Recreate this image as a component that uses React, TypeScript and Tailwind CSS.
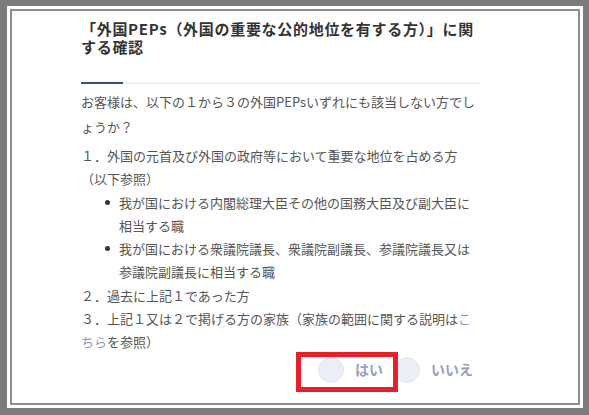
import React from 'react';

const jp = { fontFamily: '"Noto Sans CJK JP", "Noto Sans", sans-serif' };

const Bullet = ({ lines }: { lines: string[] }) => (
  <li className="flex">
    <span className="w-[38px] shrink-0 flex justify-end pr-[9px] pt-[9px]">
      <span className="block w-[5px] h-[5px] rounded-full bg-[#333]" />
    </span>
    <span>
      {lines.map((l, i) => (
        <span key={i} className="block whitespace-nowrap">{l}</span>
      ))}
    </span>
  </li>
);

const Radio = ({ label }: { label: string }) => (
  <label className="flex items-center gap-[11px]">
    <span className="block w-[26px] h-[26px] rounded-full bg-[#eceef6] border border-[#e4e6ef]" />
    <span className="text-[14px] font-bold text-[#9a9ec0]">{label}</span>
  </label>
);

export default function App() {
  return (
    <div style={jp} className="h-[415px] w-full bg-white border-t-[6px] border-r-[6px] border-l-[7px] border-b-[7px] border-[#7b7b7b] p-[3px]">
      <div className="h-full border-2 border-[#8e8e8e] pl-[69px] pt-[9px]">
        <div className="w-[400px]">
          {/* title */}
          <h2 className="text-[15px] font-bold leading-[18px] tracking-[0.7px] text-[#333]">
            <span className="block whitespace-nowrap">「外国PEPs（外国の重要な公的地位を有する方）」に関</span>
            <span className="block">する確認</span>
          </h2>

          {/* divider */}
          <div className="flex mt-[26px] h-[2px]">
            <div className="w-[42px] bg-[#3c4a8e]" />
            <div className="flex-1 bg-[#eff0f4]" />
          </div>

          {/* body */}
          <div className="text-[13px] text-[#555]">
            <p className="mt-[5px] leading-[25px]">
              <span className="block whitespace-nowrap">お客様は、以下の１から３の外国PEPsいずれにも該当しない方でし</span>
              <span className="block">ょうか？</span>
            </p>
            <ol className="mt-[5px] leading-[23.3px]">
              <li>
                <span className="block whitespace-nowrap">１．外国の元首及び外国の政府等において重要な地位を占める方</span>
                <span className="block">（以下参照）</span>
                <ul>
                  <Bullet lines={['我が国における内閣総理大臣その他の国務大臣及び副大臣に', '相当する職']} />
                  <Bullet lines={['我が国における衆議院議長、衆議院副議長、参議院議長又は', '参議院副議長に相当する職']} />
                </ul>
              </li>
              <li>２．過去に上記１であった方</li>
              <li>
                <span className="block whitespace-nowrap">
                  ３．上記１又は２で掲げる方の家族（家族の範囲に関する説明は
                  <a className="text-[#9297c6]">こ</a>
                </span>
                <span className="block">
                  <a className="text-[#9297c6]">ちら</a>を参照）
                </span>
              </li>
            </ol>
          </div>

          {/* answers */}
          <div className="relative flex justify-end gap-[11px] mt-[3px] pr-[8px]">
            <Radio label="はい" />
            <Radio label="いいえ" />
            <div className="absolute left-[215px] top-[-5px] w-[102px] h-[40px] border-[5px] border-[#e8202a]" />
          </div>
        </div>
      </div>
    </div>
  );
}
